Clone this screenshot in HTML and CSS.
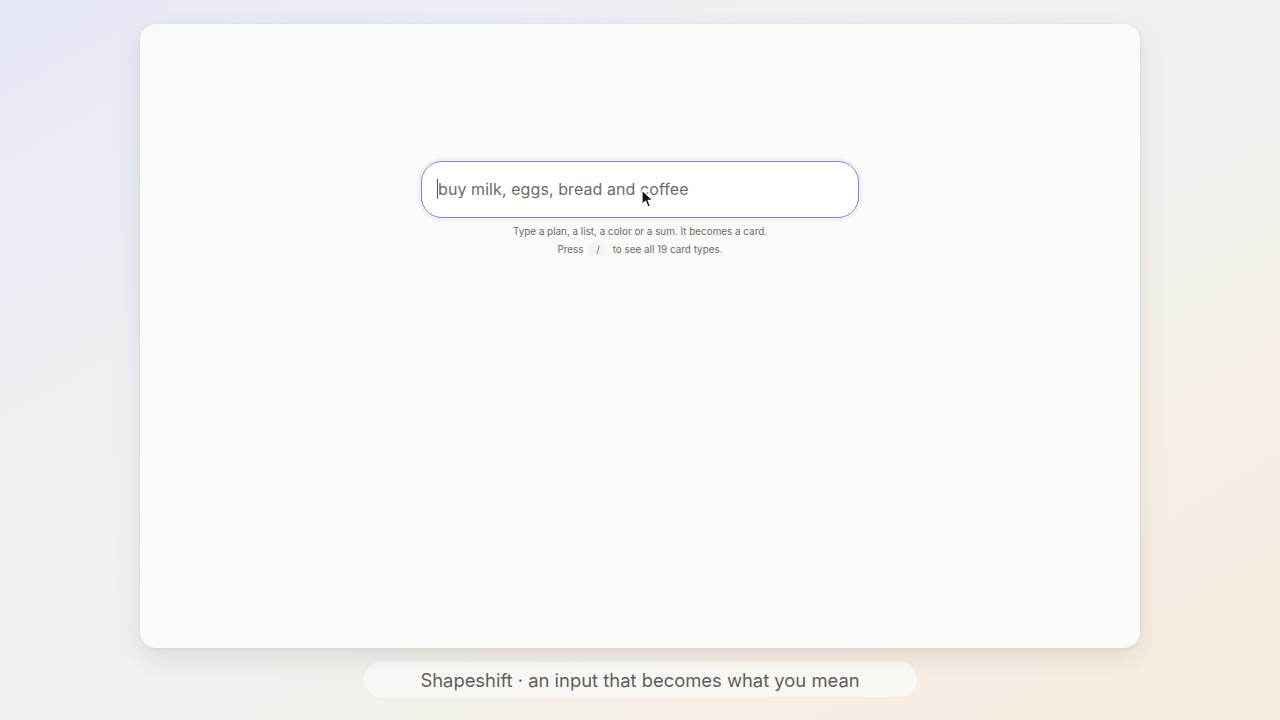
FILE: index.html
```html
<!DOCTYPE html>
<html>
<head>
<meta charset="utf-8">
<link rel="stylesheet" href="styles.css">
</head>
<body>
<div class="stage">
  <div class="window">
    <div class="composer">
      <div class="field">
        <span class="caret"></span><span class="placeholder">buy milk, eggs, bread and coffee</span>
        <svg class="pointer" width="14" height="20" viewBox="0 0 14 20"><path d="M1 1 L1 15.5 L4.6 12.2 L7 18 L9.4 17 L7.1 11.4 L12 11.4 Z" fill="#111" stroke="#fff" stroke-width="1.2" stroke-linejoin="round"/></svg>
      </div>
      <p class="hint">Type a plan, a list, a color or a sum. It becomes a card.</p>
      <p class="hint">Press <kbd>/</kbd> to see all 19 card types.</p>
    </div>
  </div>
  <div class="tagline">Shapeshift · an input that becomes what you mean</div>
</div>
</body>
</html>
```
FILE: styles.css
```css
html, body {
  margin: 0;
  height: 100%;
}
body {
  font-family: Inter, "Noto Sans", sans-serif;
  background: linear-gradient(to bottom right, #e6e9f7 0%, #eef0f3 30%, #f2f1ee 55%, #f6efe6 80%, #f7ece1 100%);
  overflow: hidden;
}
.stage {
  display: flex;
  flex-direction: column;
  align-items: center;
  padding-top: 24px;
}
.window {
  width: 1000px;
  height: 624px;
  box-sizing: border-box;
  background: #fafaf8;
  border-radius: 16px;
  box-shadow: 0 10px 28px rgba(50,45,40,0.11), 0 1px 4px rgba(50,45,40,0.07);
  display: flex;
  flex-direction: column;
  align-items: center;
  padding-top: 137px;
}
.composer {
  display: flex;
  flex-direction: column;
  align-items: center;
}
.field {
  position: relative;
  width: 438px;
  height: 57px;
  box-sizing: border-box;
  background: #fff;
  border: 1px solid #8088cf;
  border-radius: 21px;
  box-shadow: 0 0 0 3px rgba(110,118,210,0.07);
  display: flex;
  align-items: center;
  padding-left: 15px;
  padding-bottom: 1px;
  margin-bottom: 4px;
}
.caret {
  width: 1px;
  height: 20px;
  background: #555;
}
.placeholder {
  font-size: 16px;
  color: #6b6b6b;
  letter-spacing: 0.08px;
}
.pointer {
  position: absolute;
  left: 219px;
  top: 27px;
}
.hint {
  margin: 0;
  font-size: 9.9px;
  line-height: 18px;
  color: #6a6a6a;
}
kbd {
  font-family: inherit;
  font-size: 9.9px;
  background: #f4f4f2;
  border-radius: 4px;
  padding: 1px 7px;
  margin: 0 3px;
  color: #6a6a6a;
}
.tagline {
  margin-top: 14px;
  width: 553px;
  height: 35px;
  box-sizing: border-box;
  border-radius: 18px;
  background: rgba(255,255,255,0.5);
  display: flex;
  align-items: center;
  justify-content: center;
  font-size: 18.4px;
  color: #5e5e5e;
}
```
